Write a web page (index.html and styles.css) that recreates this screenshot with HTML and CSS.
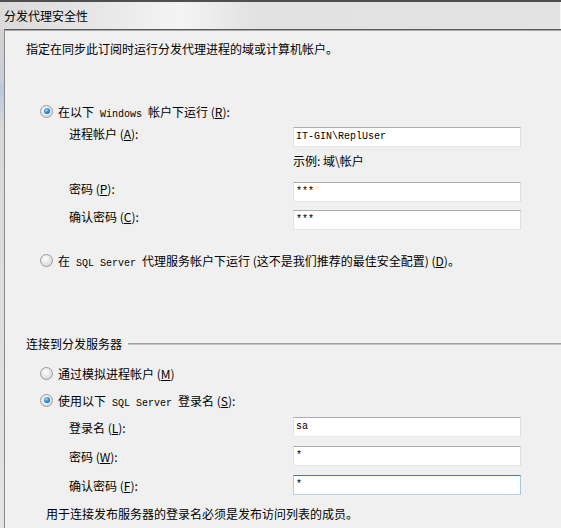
FILE: index.html
```html
<!DOCTYPE html>
<html lang="zh-CN">
<head>
  <meta charset="UTF-8" />
  <title>分发代理安全性</title>
  <link rel="stylesheet" href="styles.css">
</head>
<body>
  <div class="topline"></div>
  <div class="titlebar">分发代理安全性</div>

  <div class="frame">
    <div class="edge"></div>
    <div class="panel">
      <p class="intro">指定在同步此订阅时运行分发代理进程的域或计算机帐户。</p>

      <div class="opt opt-win"><span class="radio on"></span><span>在以下<span class="en"> Windows </span>帐户下运行 (<u>R</u>):</span></div>

      <div class="fields fields-win">
        <div class="row">
          <span class="lbl">进程帐户 (<u>A</u>):</span>
          <div>
            <div class="box">IT-GIN\ReplUser</div>
            <div class="hint">示例: 域\帐户</div>
          </div>
        </div>
        <div class="row row-pwd">
          <span class="lbl">密码 (<u>P</u>):</span>
          <div class="box">***</div>
        </div>
        <div class="row">
          <span class="lbl">确认密码 (<u>C</u>):</span>
          <div class="box">***</div>
        </div>
      </div>

      <div class="opt opt-agent"><span class="radio"></span><span>在<span class="en"> SQL Server </span>代理服务帐户下运行 (这不是我们推荐的最佳安全配置) (<u>D</u>)。</span></div>

      <div class="section">连接到分发服务器</div>

      <div class="opt opt-imp"><span class="radio"></span><span>通过模拟进程帐户 (<u>M</u>)</span></div>
      <div class="opt opt-login"><span class="radio on"></span><span>使用以下<span class="en"> SQL Server </span>登录名 (<u>S</u>):</span></div>

      <div class="fields fields-sql">
        <div class="row">
          <span class="lbl">登录名 (<u>L</u>):</span>
          <div class="box">sa</div>
        </div>
        <div class="row">
          <span class="lbl">密码 (<u>W</u>):</span>
          <div class="box">*</div>
        </div>
        <div class="row">
          <span class="lbl">确认密码 (<u>F</u>):</span>
          <div class="box focus">*</div>
        </div>
      </div>

      <p class="note">用于连接发布服务器的登录名必须是发布访问列表的成员。</p>
    </div>
  </div>
</body>
</html>
```

FILE: styles.css
```css
body {
  margin: 0;
  width: 561px;
  height: 528px;
  overflow: hidden;
  background: #f0f0f0;
  font-family: "Noto Sans CJK SC", "Noto Sans", sans-serif;
  font-size: 12px;
  color: #000;
}

u {
  text-decoration: underline;
  text-underline-offset: 1px;
}

.en {
  font-family: "Liberation Mono", monospace;
  font-size: 10px;
}

.topline {
  height: 2px;
  background: #4f4f4f;
}

.titlebar {
  height: 27px;
  line-height: 27px;
  padding-left: 4px;
  background: linear-gradient(to right, #dadada 0%, #e9e9e9 20%, #f4f4f4 32%, #e2e2e2 45%, #e3e3e3 100%);
  box-shadow: inset -1px 0 #f6f6f6;
}

.frame {
  display: flex;
  height: 499px;
}

.edge {
  width: 4px;
  background: linear-gradient(to bottom, #d2d2d2 0%, #c9ced8 10%, #b9c8dc 12%, #d8d8d8 20%, #e4e4e4 100%);
}

.panel {
  flex: 1;
  border-left: 1px solid #8a8a8a;
  border-top: 1px solid #5a5a5a;
  box-shadow: inset 0 1px #a9a9a9;
  padding: 11px 0 0 21px;
}

.intro {
  margin: 0;
  line-height: 16px;
}

.opt {
  display: flex;
  align-items: center;
  height: 20px;
  white-space: nowrap;
}

.opt-win { margin-top: 44px; }
.opt-agent { margin-top: 20px; }
.opt-imp { margin-top: 11px; }
.opt-login { margin-top: 7px; }

.radio {
  position: relative;
  box-sizing: border-box;
  width: 13px;
  height: 13px;
  margin: 0 5px 0 14px;
  border: 1px solid #9a9a9a;
  border-radius: 50%;
  background: radial-gradient(circle at 40% 35%, #ffffff 0%, #e8e8e8 45%, #cfcfcf 100%);
  flex: none;
}

.radio.on::after {
  content: "";
  position: absolute;
  left: 2.5px;
  top: 2.5px;
  width: 6px;
  height: 6px;
  border-radius: 50%;
  background: radial-gradient(circle at 40% 35%, #9fdcff 0%, #2f8fd8 45%, #0f4f8f 100%);
}

.fields {
  margin-left: 43px;
}

.row {
  display: grid;
  grid-template-columns: 224px 228px;
  margin-top: 8px;
}

.fields-win { margin-top: 6px; }
.fields-win .row:first-child { margin-top: 0; }
.fields-win .lbl { line-height: 13px; }
.fields-win .row-pwd { margin-top: 14px; }

.fields-sql { margin-top: 7px; }
.fields-sql .row:first-child { margin-top: 0; }
.fields-sql .lbl { line-height: 20px; padding-top: 1px; }

.box {
  box-sizing: border-box;
  height: 20px;
  padding-left: 2px;
  line-height: 18px;
  background: #fff;
  border: 1px solid;
  border-color: #abadb3 #dbdfe6 #e3e9ef #e2e3ea;
  font-family: "Liberation Mono", monospace;
  font-size: 10px;
}

.box.focus {
  border-color: #3d7bad #a4c9e3 #b5cfe7 #b5cfe7;
}

.hint {
  margin-top: 7px;
  line-height: 14px;
}

.section {
  display: flex;
  align-items: center;
  margin-top: 66px;
  line-height: 16px;
}

.section::after {
  content: "";
  flex: 1;
  margin-left: 6px;
  border-top: 1px solid #a0a0a0;
  border-bottom: 1px solid #c4c4c4;
}

.note {
  margin: 10px 0 0 20px;
  line-height: 16px;
}
```
